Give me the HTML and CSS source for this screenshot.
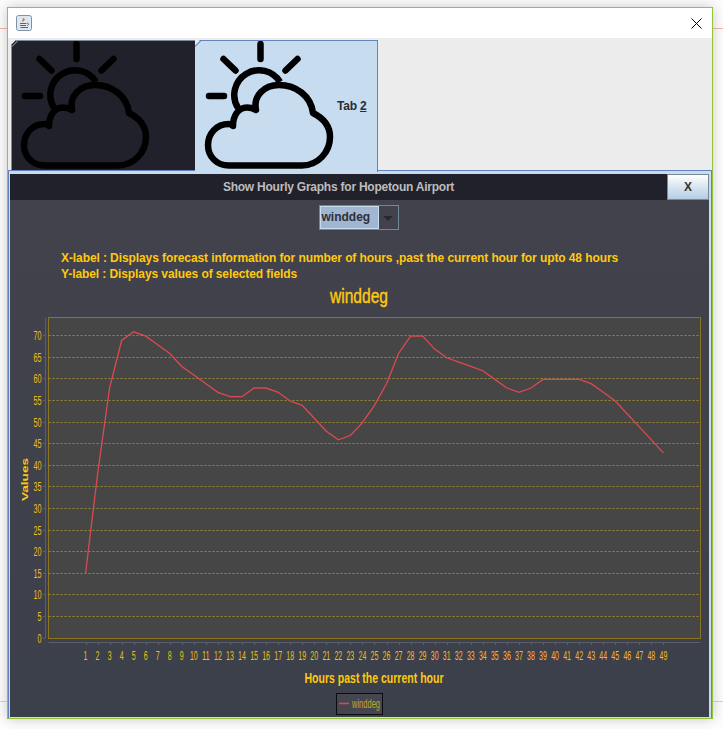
FILE: index.html
```html
<!DOCTYPE html>
<html lang="en">
<head>
    <meta charset="UTF-8">
    <meta name="viewport" content="width=device-width, initial-scale=1.0">
    <title>Hourly Graphs</title>
    <link rel="stylesheet" href="styles.css">
</head>
<body>
    <svg class="defs" width="0" height="0">
        <symbol id="weather" viewBox="201 41 135 129">
            <g fill="none" stroke="#000" stroke-width="6.500" stroke-linecap="round" stroke-linejoin="round">
                <path d="M260.500 44V59M223.500 59L235.500 70.500M297.500 59L285.500 70.500M209 96H224"/>
                <path d="M238 108A23.500 23.500 0 1 1 280 82" stroke-linecap="butt"/>
                <path d="M229 165.500H302C318 165.500 330 152 330 137C330 126 323 118 313 113C311 96 296 85 279 85C264 85 253 96 256 110C252 107.500 249 107.500 247 107.500C238 107.500 233 116 233 126C231 124.500 230 124 229 124C216 124 208 134 208 145C208 157 217 165.500 229 165.500Z"/>
            </g>
        </symbol>
    </svg>

    <div class="window">
        <div class="titlebar">
            <svg class="app-icon" width="16" height="16" viewBox="0 0 16 16">
                <rect x="0.500" y="0.500" width="15" height="15" rx="2" fill="#dfe8f0" stroke="#7f93a8"/>
                <path d="M8 2.500C6 4.500 5.500 5.500 7 7.500C7 6 9 5 9.500 4C8.500 4.500 8 4 8 2.500Z" fill="#e8772e"/>
                <path d="M4 8.500H10.500M4 10.500H10M4.500 12.500H12" stroke="#3f6b9c" stroke-width="1" fill="none"/>
                <path d="M11 8C13 8 13 10.500 11 10.500" stroke="#3f6b9c" stroke-width="1" fill="none"/>
            </svg>
            <svg class="close-icon" width="11" height="11" viewBox="0 0 11 11">
                <path d="M0.500 0.500L10.500 10.500M10.500 0.500L0.500 10.500" stroke="#000" stroke-width="1"/>
            </svg>
        </div>

        <div class="content">
            <div class="tabs">
                <div class="tab tab-dark">
                    <svg class="tab-icon" width="135" height="129"><use href="#weather"/></svg>
                </div>
                <div class="tab tab-active">
                    <svg class="tab-icon" width="135" height="129"><use href="#weather"/></svg>
                    <span class="tab-label">Tab <u>2</u></span>
                </div>
            </div>

            <div class="panel">
                <div class="panel-inner">
                    <div class="panel-header">
                        <span class="panel-title">Show Hourly Graphs for Hopetoun Airport</span>
                        <button class="close-btn">X</button>
                    </div>
                    <div class="panel-body">
                        <div class="combo-row">
                            <div class="combo">
                                <span class="combo-value">winddeg</span>
                                <span class="combo-arrow"></span>
                            </div>
                        </div>
                        <div class="info">
                            <div>X-label : Displays forecast information for number of hours ,past the current hour for upto 48 hours</div>
                            <div>Y-label : Displays values of selected fields</div>
                        </div>
                        <svg id="chart" class="chart" width="699" height="435" viewBox="10 281 699 435"></svg>
                    </div>
                </div>
            </div>
        </div>
    </div>

    <script src="chart.js"></script>
</body>
</html>
```

FILE: styles.css
```css
body {
    margin: 0;
    height: 729px;
    overflow: hidden;
    font-family: "Liberation Sans", Arial, sans-serif;
    background-color: #fdfdfd;
    background-image:
        linear-gradient(#f4b5a8, #f4b5a8),
        linear-gradient(#d4d4d4, #d4d4d4);
    background-repeat: no-repeat;
    background-size: 100% 1px;
    background-position: 0 28px, 0 701px;
}

.defs {
    position: absolute;
}

.window {
    width: 704px;
    height: 710px;
    margin: 7px 0 0 7px;
    border: 1px solid #94c43c;
    background: #fff;
    box-shadow: 0 0 12px rgba(0, 0, 0, 0.22);
    display: flex;
    flex-direction: column;
}

.titlebar {
    height: 30px;
    flex: none;
    display: flex;
    align-items: center;
    justify-content: space-between;
    padding: 0 10px 0 8px;
    background: #fff;
}

.app-icon {
    display: block;
}

.close-icon {
    display: block;
}

.content {
    flex: 1;
    display: flex;
    flex-direction: column;
    background: #ececec;
}

.tabs {
    display: flex;
    margin: 2px 0 0 3px;
    height: 131px;
    flex: none;
}

.tab {
    position: relative;
    display: flex;
    align-items: flex-start;
    clip-path: polygon(5px 0, 100% 0, 100% 100%, 0 100%, 0 5px);
}

.tab::before {
    content: "";
    position: absolute;
    left: -1px;
    top: 2px;
    width: 8px;
    height: 1px;
    transform: rotate(-45deg);
}

.tab-dark {
    width: 178px;
    height: 129px;
    padding-left: 5px;
    background: #20212a;
    border-top: 1px solid #7d8b9c;
    border-left: 1px solid #7d8b9c;
}

.tab-dark::before {
    background: #7d8b9c;
}

.tab-active {
    width: 176px;
    height: 131px;
    padding-left: 6px;
    background: #c8dcf0;
    border-top: 1px solid #6382bf;
    border-right: 1px solid #6382bf;
    z-index: 1;
}

.tab-active::before {
    background: #6382bf;
}

.tab-icon {
    display: block;
    flex: none;
}

.tab-label {
    margin: 58px 0 0 1px;
    font-size: 12px;
    letter-spacing: -0.200px;
    font-weight: bold;
    color: #2a2c36;
}

.panel {
    flex: 1;
    display: flex;
    margin-top: -1px;
    border: 1px solid #6382bf;
    border-bottom: 0;
    background: #c8dcf0;
    padding: 3px 2px 1px 1px;
}

.panel-inner {
    flex: 1;
    display: flex;
    flex-direction: column;
}

.panel-header {
    height: 26px;
    flex: none;
    display: flex;
    align-items: center;
    background: #20212a;
}

.panel-title {
    width: 657px;
    text-align: center;
    font-size: 12px;
    letter-spacing: -0.230px;
    font-weight: bold;
    color: #bdbdbd;
}

.close-btn {
    width: 42px;
    height: 26px;
    margin: 0;
    padding: 0;
    border: 1px solid #76889a;
    background: linear-gradient(#ffffff, #dce7f1 45%, #b4cde4);
    color: #333;
    font-family: inherit;
    font-size: 12px;
    font-weight: bold;
}

.panel-body {
    flex: 1;
    background: linear-gradient(#42424c, #3c404a);
}

.combo-row {
    display: flex;
    justify-content: center;
    padding: 5px 2px 0 0;
}

.combo {
    display: flex;
    width: 80px;
    height: 25px;
    box-sizing: border-box;
    border: 1px solid #71859b;
}

.combo-value {
    width: 59px;
    box-sizing: border-box;
    padding-left: 1px;
    border: 1px solid #c8dcf0;
    background: #a1b6d0;
    color: #2e2f38;
    font-size: 12px;
    font-weight: bold;
    line-height: 21px;
}

.combo-arrow {
    flex: 1;
    position: relative;
    background: #41424c;
}

.combo-arrow::after {
    content: "";
    position: absolute;
    left: 4px;
    top: 10px;
    border-left: 5px solid transparent;
    border-right: 5px solid transparent;
    border-top: 5px solid #26272f;
}

.info {
    margin: 20px 0 0 51px;
    font-size: 12px;
    letter-spacing: -0.090px;
    font-weight: bold;
    line-height: 16px;
    color: #ffc90e;
    white-space: nowrap;
}

.chart {
    display: block;
}

.chart text {
    font-family: "Liberation Sans", Arial, sans-serif;
    fill: #f2bd12;
}

.chart .tick-label {
    font-size: 12px;
}

.chart .chart-title {
    font-size: 20px;
    fill: #ffc90e;
    stroke: #ffc90e;
    stroke-width: 0.400;
}

.chart .axis-label {
    font-size: 15px;
    font-weight: bold;
    fill: #ffc90e;
}

.chart .y-label {
    font-size: 9.500px;
    font-weight: bold;
    fill: #ffc90e;
}

.chart .legend-label {
    font-size: 12px;
    fill: #c2a52c;
}
```

FILE: chart.js
```js
document.addEventListener('DOMContentLoaded', () => {
    const chart = document.getElementById('chart');
    const values = [15, 38, 58, 69, 71, 70, 68, 66, 63, 61, 59, 57, 56, 56, 58, 58, 57, 55, 54, 51,
        48, 46, 47, 50, 54, 59, 66, 70, 70, 67, 65, 64, 63, 62, 60, 58, 57, 58, 60, 60,
        60, 60, 59, 57, 55, 52, 49, 46, 43];

    const left = 48.5, right = 700.5, top = 316.5, bottom = 637.5;
    const xFor = (hour) => 85.5 + (hour - 1) * 12.04;
    const yFor = (value) => 637.7 - value * 4.322;

    let svg = `<rect x="${left}" y="${top}" width="${right - left}" height="${bottom - top}" fill="#464646" stroke="#8c7520"/>`;

    // y axis and grid lines
    svg += `<path d="M45.5 ${top}V${bottom}" stroke="#5c5f68"/>`;
    for (let v = 0; v <= 70; v += 5) {
        const y = Math.round(yFor(v)) - 0.5;
        if (v > 0) {
            svg += `<path d="M${left} ${y}H${right}" stroke="#a08a28" stroke-dasharray="2 2"/>`;
        }
        svg += `<path d="M43 ${y}H45" stroke="#5c5f68"/>`;
        const label = String(v);
        svg += `<text class="tick-label" x="41.500" y="${y + 4.5}" text-anchor="end" textLength="${label.length * 4}" lengthAdjust="spacingAndGlyphs">${label}</text>`;
    }

    // x axis
    svg += `<path d="M${left} 641.500H${right}" stroke="#5c5f68"/>`;
    values.forEach((value, i) => {
        const hour = i + 1;
        const x = xFor(hour);
        const label = String(hour);
        svg += `<path d="M${Math.round(x) + 0.5} 642V644" stroke="#5c5f68"/>`;
        svg += `<text class="tick-label" x="${x}" y="659" text-anchor="middle" textLength="${label.length * 3.9}" lengthAdjust="spacingAndGlyphs">${label}</text>`;
    });

    const points = values.map((value, i) => `${xFor(i + 1)},${yFor(value)}`).join(' ');
    svg += `<polyline points="${points}" fill="none" stroke="#dc4a50" stroke-width="1.300"/>`;

    svg += `<text class="chart-title" x="359" y="302" text-anchor="middle" textLength="58" lengthAdjust="spacingAndGlyphs">winddeg</text>`;
    svg += `<text class="axis-label" x="374" y="682" text-anchor="middle" textLength="139" lengthAdjust="spacingAndGlyphs">Hours past the current hour</text>`;
    svg += `<text class="y-label" transform="translate(28 478.500) rotate(-90)" text-anchor="middle" textLength="43" lengthAdjust="spacingAndGlyphs">Values</text>`;

    // legend
    svg += `<rect x="336.500" y="692.500" width="46" height="21" fill="#45454f" stroke="#0c0c10"/>`;
    svg += `<path d="M339 702.500H349" stroke="#dc4a50" stroke-width="1.500"/>`;
    svg += `<text class="legend-label" x="352" y="707" textLength="28" lengthAdjust="spacingAndGlyphs">winddeg</text>`;

    chart.innerHTML = svg;
});
```
